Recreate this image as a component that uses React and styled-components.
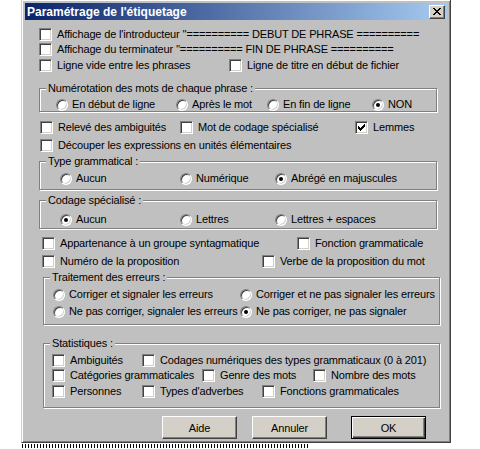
import React from "react";
import styled, { createGlobalStyle } from "styled-components";

const Global = createGlobalStyle`
  html, body { margin: 0; padding: 0; background: #fff; }
  body {
    font-family: "Liberation Sans", Arial, sans-serif;
    font-size: 11px;
    letter-spacing: -0.15px;
    color: #000;
  }
`;

const Window = styled.div`
  box-sizing: border-box;
  width: 430px;
  height: 444px;
  margin: -1px 0 0 21px;
  padding: 3px;
  background: #c0c0c0;
  border: 1px solid;
  border-color: #d4d0c8 #404040 #404040 #d4d0c8;
  box-shadow: inset 1px 1px #fff, inset -1px -1px #808080;
  display: flex;
  flex-direction: column;
`;

const TitleBar = styled.div`
  height: 17px;
  flex: none;
  display: flex;
  align-items: center;
  justify-content: space-between;
  padding: 0 2px;
  background: linear-gradient(to right, #0a246a, #a6caf0);
  color: #fff;
  font-weight: bold;
  font-size: 12px;
  letter-spacing: 0;
`;

const CloseButton = styled.div`
  box-sizing: border-box;
  width: 16px;
  height: 14px;
  display: flex;
  align-items: center;
  justify-content: center;
  background: #d4d0c8;
  border: 1px solid;
  border-color: #fff #404040 #404040 #fff;
  box-shadow: inset -1px -1px #808080;
`;

const Row = styled.div`
  display: flex;
  height: 13px;
  margin-top: ${(p) => p.mt || 0}px;
  padding-left: ${(p) => p.pl || 0}px;
`;

const Cell = styled.div`
  flex: none;
  width: ${(p) => (p.w ? `${p.w}px` : "auto")};
  height: 13px;
  display: flex;
  align-items: center;
  white-space: nowrap;
`;

const Box = styled.div`
  box-sizing: border-box;
  flex: none;
  width: 13px;
  height: 13px;
  display: flex;
  align-items: center;
  justify-content: center;
  background: #fff;
  border: 1px solid;
  border-color: #808080 #fff #fff #808080;
  box-shadow: inset 1px 1px #404040, inset -1px -1px #d4d0c8;
`;

const Radio = styled.div`
  box-sizing: border-box;
  flex: none;
  width: 12px;
  height: 12px;
  display: flex;
  align-items: center;
  justify-content: center;
  border-radius: 50%;
  background: #fff;
  border: 1px solid;
  border-color: #808080 #fff #fff #808080;
  box-shadow: inset 1px 1px #404040, inset -1px -1px #d4d0c8;
`;

const Dot = styled.div`
  width: 4px;
  height: 4px;
  border-radius: 50%;
  background: #000;
`;

const Label = styled.span`
  margin-left: ${(p) => (p.radio ? 4 : 5)}px;
  line-height: 13px;
`;

const Group = styled.div`
  box-sizing: border-box;
  position: relative;
  flex: none;
  width: ${(p) => p.w}px;
  height: ${(p) => p.h}px;
  margin-top: ${(p) => p.mt}px;
  margin-left: ${(p) => p.ml}px;
  padding: ${(p) => p.pt}px 0 0 ${(p) => p.pl}px;
  border: 1px solid #808080;
  box-shadow: inset 1px 1px #fff, 1px 1px #fff;
  display: flex;
  flex-direction: column;
`;

const Caption = styled.span`
  position: absolute;
  top: -7px;
  left: 6px;
  padding: 0 2px;
  line-height: 13px;
  background: #c0c0c0;
  white-space: nowrap;
`;

const Buttons = styled.div`
  display: flex;
  margin-top: 8px;
  padding-left: 137px;
`;

const Button = styled.div`
  box-sizing: border-box;
  width: 75px;
  height: 23px;
  margin-right: ${(p) => p.mr || 0}px;
  display: flex;
  align-items: center;
  justify-content: center;
  background: #d4d0c8;
  border: 1px solid;
  border-color: ${(p) => (p.primary ? "#000" : "#fff #404040 #404040 #fff")};
  box-shadow: ${(p) =>
    p.primary
      ? "inset 1px 1px #fff, inset -1px -1px #404040, inset -2px -2px #808080"
      : "inset -1px -1px #808080"};
`;

const Strip = styled.div`
  width: 288px;
  height: 4px;
  margin: 1px 0 0 22px;
  background: repeating-linear-gradient(90deg, #000 0 1px, #fff 1px 3px);
`;

const CheckMark = () => (
  <svg width="7" height="7" viewBox="0 0 7 7" shapeRendering="crispEdges">
    <path
      fill="#000"
      d="M6 0h1v1h-1z M5 1h2v1h-2z M0 2h1v1h-1z M4 2h3v1h-3z M0 3h2v1h-2z M3 3h3v1h-3z M0 4h5v1h-5z M1 5h3v1h-3z M2 6h1v1h-1z"
    />
  </svg>
);

const CloseX = () => (
  <svg width="8" height="7" viewBox="0 0 8 7" shapeRendering="crispEdges">
    <path
      fill="#000"
      d="M0 0h2v1h-2z M6 0h2v1h-2z M1 1h2v1h-2z M5 1h2v1h-2z M2 2h4v1h-4z M3 3h2v1h-2z M2 4h4v1h-4z M1 5h2v1h-2z M5 5h2v1h-2z M0 6h2v1h-2z M6 6h2v1h-2z"
    />
  </svg>
);

function Option({ w, radio, checked, children }) {
  return (
    <Cell w={w}>
      {radio ? (
        <Radio>{checked && <Dot />}</Radio>
      ) : (
        <Box>{checked && <CheckMark />}</Box>
      )}
      <Label radio={radio}>{children}</Label>
    </Cell>
  );
}

function App() {
  return (
    <>
      <Global />
      <Window>
        <TitleBar>
          <span>Paramétrage de l'étiquetage</span>
          <CloseButton>
            <CloseX />
          </CloseButton>
        </TitleBar>

        <Row mt={8} pl={14}>
          <Option>Affichage de l'introducteur ''========== DEBUT DE PHRASE ==========</Option>
        </Row>
        <Row mt={2} pl={14}>
          <Option>Affichage du terminateur ''========== FIN DE PHRASE ==========</Option>
        </Row>
        <Row mt={3} pl={14}>
          <Option w={190}>Ligne vide entre les phrases</Option>
          <Option>Ligne de titre en début de fichier</Option>
        </Row>

        <Group mt={16} ml={14} w={398} h={24} pt={9} pl={16}>
          <Caption>Numérotation des mots de chaque phrase :</Caption>
          <Row>
            <Option radio w={120}>En début de ligne</Option>
            <Option radio w={91}>Après le mot</Option>
            <Option radio w={105}>En fin de ligne</Option>
            <Option radio checked>NON</Option>
          </Row>
        </Group>

        <Row mt={9} pl={15}>
          <Option w={140}>Relevé des ambiguités</Option>
          <Option w={175}>Mot de codage spécialisé</Option>
          <Option checked>Lemmes</Option>
        </Row>
        <Row mt={5} pl={15}>
          <Option>Découper les expressions en unités élémentaires</Option>
        </Row>

        <Group mt={9} ml={14} w={398} h={29} pt={10} pl={20}>
          <Caption>Type grammatical :</Caption>
          <Row>
            <Option radio w={120}>Aucun</Option>
            <Option radio w={95}>Numérique</Option>
            <Option radio checked>Abrégé en majuscules</Option>
          </Row>
        </Group>

        <Group mt={10} ml={14} w={398} h={29} pt={12} pl={20}>
          <Caption>Codage spécialisé :</Caption>
          <Row>
            <Option radio checked w={120}>Aucun</Option>
            <Option radio w={95}>Lettres</Option>
            <Option radio>Lettres + espaces</Option>
          </Row>
        </Group>

        <Row mt={8} pl={17}>
          <Option w={255}>Appartenance à un groupe syntagmatique</Option>
          <Option>Fonction grammaticale</Option>
        </Row>
        <Row mt={5} pl={17}>
          <Option w={220}>Numéro de la proposition</Option>
          <Option>Verbe de la proposition du mot</Option>
        </Row>

        <Group mt={9} ml={18} w={397} h={48} pt={10} pl={9}>
          <Caption>Traitement des erreurs :</Caption>
          <Row>
            <Option radio w={187}>Corriger et signaler les erreurs</Option>
            <Option radio>Corriger et ne pas signaler les erreurs</Option>
          </Row>
          <Row mt={4}>
            <Option radio w={187}>Ne pas corriger, signaler les erreurs</Option>
            <Option radio checked>Ne pas corriger, ne pas signaler</Option>
          </Row>
        </Group>

        <Group mt={18} ml={18} w={397} h={65} pt={10} pl={8}>
          <Caption>Statistiques :</Caption>
          <Row>
            <Option w={90}>Ambiguités</Option>
            <Option>Codages numériques des types grammaticaux (0 à 201)</Option>
          </Row>
          <Row mt={2}>
            <Option w={150}>Catégories grammaticales</Option>
            <Option w={111}>Genre des mots</Option>
            <Option>Nombre des mots</Option>
          </Row>
          <Row mt={3}>
            <Option w={90}>Personnes</Option>
            <Option w={120}>Types d'adverbes</Option>
            <Option>Fonctions grammaticales</Option>
          </Row>
        </Group>

        <Buttons>
          <Button mr={15}>Aide</Button>
          <Button mr={24}>Annuler</Button>
          <Button primary>OK</Button>
        </Buttons>
      </Window>
      <Strip />
    </>
  );
}

export default App;
